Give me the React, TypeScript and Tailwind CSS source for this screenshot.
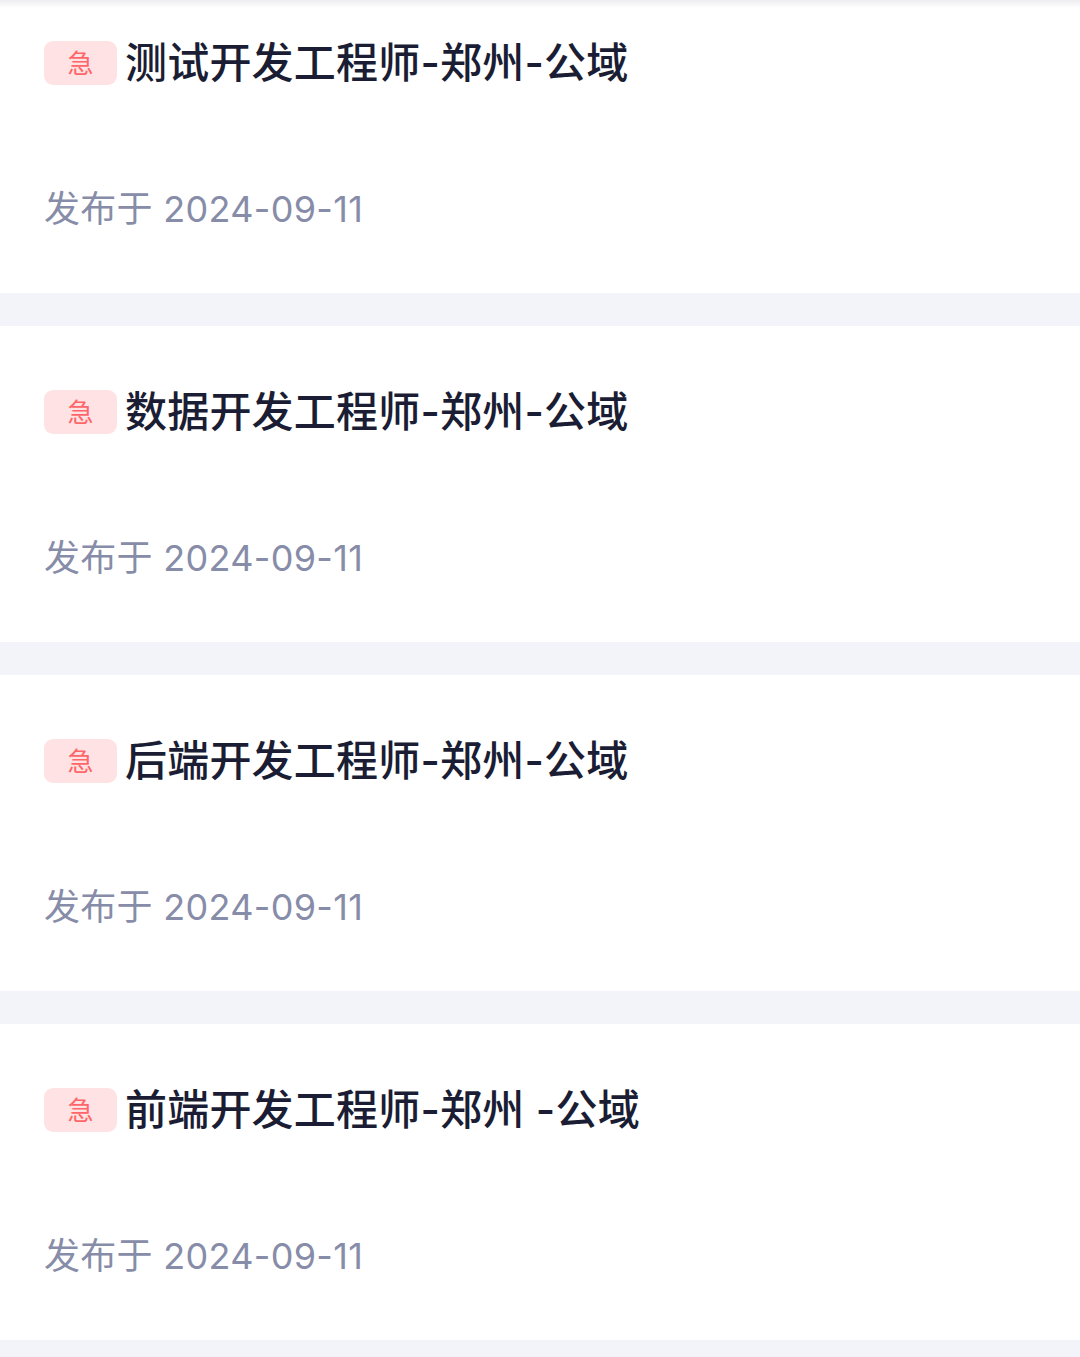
import React from "react";

const jobs = [
  { title: "测试开发工程师-郑州-公域", date: "2024-09-11" },
  { title: "数据开发工程师-郑州-公域", date: "2024-09-11" },
  { title: "后端开发工程师-郑州-公域", date: "2024-09-11" },
  { title: "前端开发工程师-郑州 -公域", date: "2024-09-11" },
];

const font = { fontFamily: '"Inter", "Noto Sans CJK SC", "Noto Sans", sans-serif' };

const JobCard = ({ title, date }: { title: string; date: string }) => (
  <div className="bg-white h-[316px] px-[44px] pt-[64px]">
    <div className="flex items-center gap-[8px] h-[44px]">
      <span className="w-[73px] h-[44px] rounded-[9px] bg-[#ffe3e4] text-[#ff6669] text-[26px] flex items-center justify-center">
        急
      </span>
      <span className="text-[42px] font-medium text-[#1a1d33] leading-none tracking-[0.2px] whitespace-pre">
        {title}
      </span>
    </div>
    <div className="mt-[100px] h-[48px] flex items-center text-[36px] text-[#878ca8] leading-none tracking-[0.3px]">
      发布于 {date}
    </div>
  </div>
);

export default function App() {
  return (
    <div className="relative w-[1080px] h-[1357px] overflow-hidden bg-[#f3f4f9]" style={font}>
      <div className="-mt-[23px] flex flex-col gap-[33px]">
        {jobs.map((job, i) => (
          <JobCard key={i} title={job.title} date={job.date} />
        ))}
      </div>
      {/* header shadow */}
      <div className="absolute top-0 left-0 right-0 h-[8px] bg-gradient-to-b from-[#ededf0] to-transparent" />
    </div>
  );
}
